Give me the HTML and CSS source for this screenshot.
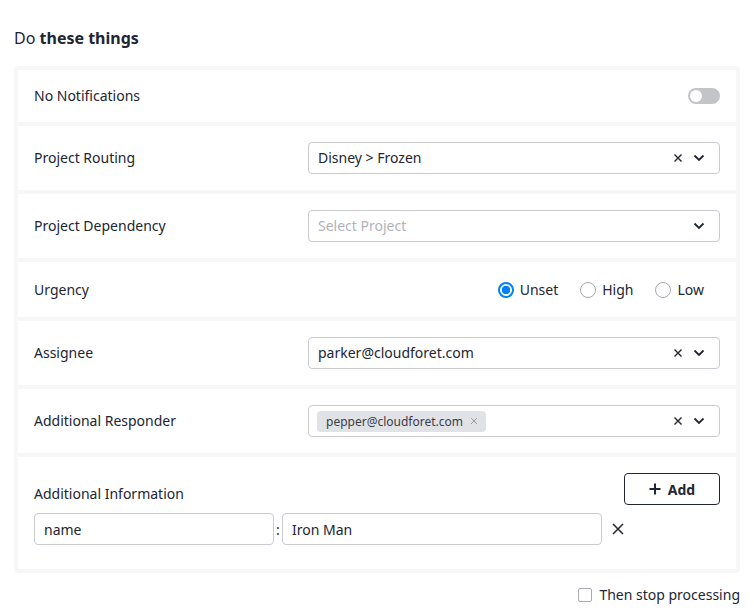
FILE: index.html
```html
<!DOCTYPE html>
<html>
<head>
<meta charset="utf-8">
<link rel="stylesheet" href="styles.css">
</head>
<body>
<div class="page">
  <h2 class="title">Do <b>these things</b></h2>
  <div class="panel">
    <div class="row row-short">
      <span class="label">No Notifications</span>
      <span class="toggle"><span class="knob"></span></span>
    </div>
    <div class="row">
      <span class="label">Project Routing</span>
      <div class="select">
        <span class="value">Disney &gt; Frozen</span>
        <span class="icons">
          <svg class="clear" width="10" height="10" viewBox="0 0 10 10"><path d="M1.5 1.5l7 7M8.5 1.5l-7 7" stroke="#222532" stroke-width="1.4" fill="none"/></svg>
          <svg class="chev" width="12" height="8" viewBox="0 0 12 8"><path d="M1.5 1.5l4.5 4.5 4.5-4.5" stroke="#222532" stroke-width="1.8" fill="none"/></svg>
        </span>
      </div>
    </div>
    <div class="row">
      <span class="label">Project Dependency</span>
      <div class="select">
        <span class="value placeholder">Select Project</span>
        <span class="icons">
          <svg class="chev" width="12" height="8" viewBox="0 0 12 8"><path d="M1.5 1.5l4.5 4.5 4.5-4.5" stroke="#222532" stroke-width="1.8" fill="none"/></svg>
        </span>
      </div>
    </div>
    <div class="row row-radio">
      <span class="label">Urgency</span>
      <div class="radios">
        <label class="radio"><span class="circle checked"></span>Unset</label>
        <label class="radio"><span class="circle"></span>High</label>
        <label class="radio"><span class="circle"></span>Low</label>
      </div>
    </div>
    <div class="row">
      <span class="label">Assignee</span>
      <div class="select">
        <span class="value">parker@cloudforet.com</span>
        <span class="icons">
          <svg class="clear" width="10" height="10" viewBox="0 0 10 10"><path d="M1.5 1.5l7 7M8.5 1.5l-7 7" stroke="#222532" stroke-width="1.4" fill="none"/></svg>
          <svg class="chev" width="12" height="8" viewBox="0 0 12 8"><path d="M1.5 1.5l4.5 4.5 4.5-4.5" stroke="#222532" stroke-width="1.8" fill="none"/></svg>
        </span>
      </div>
    </div>
    <div class="row">
      <span class="label">Additional Responder</span>
      <div class="select select-tags">
        <span class="tag">pepper@cloudforet.com<svg width="8" height="8" viewBox="0 0 8 8"><path d="M1 1l6 6M7 1l-6 6" stroke="#9a9ca4" stroke-width="1" fill="none"/></svg></span>
        <span class="icons">
          <svg class="clear" width="10" height="10" viewBox="0 0 10 10"><path d="M1.5 1.5l7 7M8.5 1.5l-7 7" stroke="#222532" stroke-width="1.4" fill="none"/></svg>
          <svg class="chev" width="12" height="8" viewBox="0 0 12 8"><path d="M1.5 1.5l4.5 4.5 4.5-4.5" stroke="#222532" stroke-width="1.8" fill="none"/></svg>
        </span>
      </div>
    </div>
    <div class="row-info">
      <div class="info-head">
        <span class="label info-label">Additional Information</span>
        <button class="add-btn"><svg width="12" height="12" viewBox="0 0 12 12"><path d="M6 0.5v11M0.5 6h11" stroke="#222532" stroke-width="2" fill="none"/></svg>Add</button>
      </div>
      <div class="info-line">
        <input class="input input-key" value="name">
        <span class="colon">:</span>
        <input class="input input-val" value="Iron Man">
        <span class="del"><svg width="12" height="12" viewBox="0 0 12 12"><path d="M1 1l10 10M11 1l-10 10" stroke="#222532" stroke-width="1.5" fill="none"/></svg></span>
      </div>
    </div>
  </div>
  <div class="stop">
    <label class="check"><span class="box"></span>Then stop processing</label>
  </div>
</div>
</body>
</html>
```

FILE: styles.css
```css
* { box-sizing: border-box; }
body {
  margin: 0;
  font-family: "Noto Sans", "Open Sans", sans-serif;
  color: #222532;
  background: #fff;
}
.page {
  width: 740px;
  padding: 26px 0 0 14px;
}
.title {
  margin: 0 0 16px 0;
  font-size: 16px;
  line-height: 24px;
  font-weight: 400;
}
.title b { font-weight: 700; }
.panel {
  background: #f7f7f8;
  padding: 4px;
  border-radius: 4px;
  display: flex;
  flex-direction: column;
  gap: 4px;
}
.row {
  background: #fff;
  height: 64px;
  padding: 0 16px;
  display: flex;
  align-items: center;
  justify-content: space-between;
}
.row-short { height: 52px; }
.row-radio { height: 55px; }
.label {
  font-size: 14px;
  line-height: 20px;
}
.toggle {
  width: 32px;
  height: 16px;
  border-radius: 8px;
  background: #c3c4c9;
  position: relative;
}
.knob {
  position: absolute;
  left: 2px;
  top: 2px;
  width: 12px;
  height: 12px;
  border-radius: 50%;
  background: #fff;
}
.select {
  width: 412px;
  height: 32px;
  border: 1px solid #c9cbd1;
  border-radius: 4px;
  display: flex;
  align-items: center;
  justify-content: space-between;
  padding: 0 14px 0 9px;
  font-size: 14px;
}
.select-tags { padding-left: 8px; }
.value { line-height: 20px; }
.placeholder { color: #b1b3ba; }
.icons {
  display: flex;
  align-items: center;
  gap: 10px;
}
.icons svg { display: block; }
.tag {
  display: flex;
  align-items: center;
  gap: 7px;
  background: #e1e2e6;
  border-radius: 4px;
  height: 21px;
  padding: 0 8px 0 9px;
  font-size: 12px;
  color: #3a3d47;
}
.radios {
  display: flex;
  align-items: center;
  gap: 22px;
  padding-right: 16px;
}
.radio {
  display: flex;
  align-items: center;
  gap: 6px;
  font-size: 14px;
  line-height: 20px;
}
.circle {
  width: 16px;
  height: 16px;
  border-radius: 50%;
  border: 1px solid #a9abb2;
  background: #fff;
}
.circle.checked {
  border: 2px solid #0080fb;
  background: radial-gradient(circle, #0080fb 0 4px, #fff 4.5px);
}
.row-info {
  background: #fff;
  height: 112px;
  padding: 16px 16px 0 16px;
}
.info-head {
  display: flex;
  justify-content: space-between;
  align-items: flex-end;
}
.info-label { padding-bottom: 1px; }
.add-btn {
  width: 96px;
  height: 32px;
  border: 1px solid #222532;
  border-radius: 4px;
  background: #fff;
  font-family: inherit;
  font-size: 14px;
  font-weight: 700;
  color: #222532;
  display: flex;
  align-items: center;
  justify-content: center;
  gap: 7px;
  padding: 0;
}
.info-line {
  display: flex;
  align-items: center;
  margin-top: 8px;
}
.input {
  height: 32px;
  border: 1px solid #c9cbd1;
  border-radius: 4px;
  font-family: inherit;
  font-size: 14px;
  color: #222532;
  padding: 0 9px;
  outline: none;
}
.input-key { width: 240px; }
.input-val { width: 320px; }
.colon {
  width: 8px;
  text-align: center;
  font-size: 14px;
}
.del {
  width: 32px;
  display: flex;
  justify-content: center;
}
.del svg { display: block; }
.stop {
  display: flex;
  justify-content: flex-end;
  margin-top: 12px;
}
.check {
  display: flex;
  align-items: center;
  gap: 7px;
  font-size: 14px;
  line-height: 20px;
}
.box {
  width: 14px;
  height: 14px;
  border: 1px solid #a9abb2;
  border-radius: 2px;
}
```
